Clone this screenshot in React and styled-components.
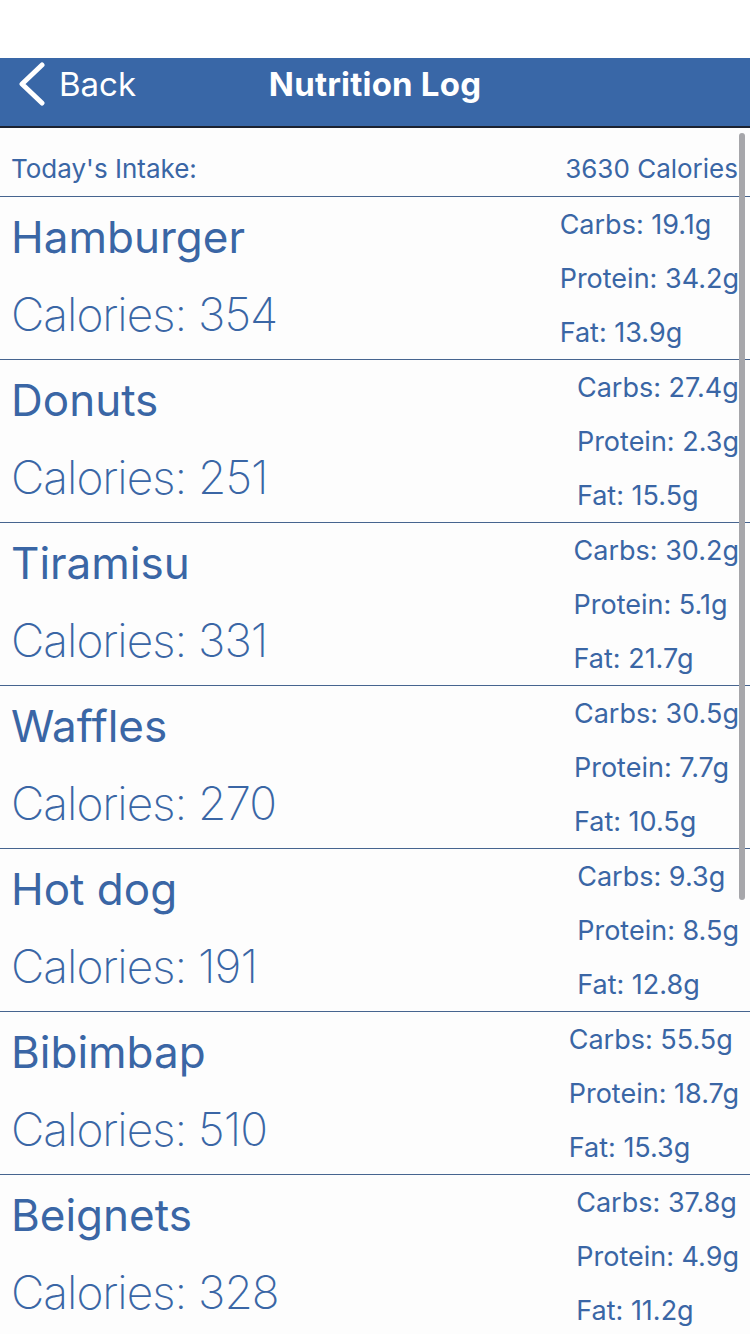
import React from "react";
import styled, { createGlobalStyle } from "styled-components";

const GlobalStyle = createGlobalStyle`
  html, body {
    margin: 0;
    padding: 0;
    background: #ffffff;
  }
  body {
    font-family: Inter, "Noto Sans", "Liberation Sans", sans-serif;
    -webkit-font-smoothing: antialiased;
  }
`;

const Screen = styled.div`
  width: 750px;
  height: 1334px;
  overflow: hidden;
  position: relative;
  background: #ffffff;
`;

const StatusArea = styled.div`
  height: 58px;
  background: #ffffff;
`;

const NavBar = styled.header`
  height: 70px;
  box-sizing: border-box;
  padding-bottom: 16px;
  background: #3967a7;
  border-bottom: 2px solid #1c2230;
  display: grid;
  grid-template-columns: 1fr auto 1fr;
  align-items: center;
  color: #ffffff;
`;

const BackButton = styled.div`
  display: flex;
  align-items: center;
  gap: 13px;
  padding-left: 18px;
  font-size: 33px;
  font-weight: 400;
`;

const Title = styled.h1`
  margin: 0;
  font-size: 33px;
  font-weight: 700;
  letter-spacing: 0.2px;
`;

const List = styled.div`
  background: #fdfdfd;
  color: #3a66a5;
`;

const IntakeRow = styled.div`
  height: 69px;
  border-bottom: 1px solid #46648f;
  display: flex;
  align-items: center;
  justify-content: space-between;
  padding: 13px 12px 0 11px;
  box-sizing: border-box;
  font-size: 26px;
`;

const FoodRow = styled.div`
  height: 163px;
  box-sizing: border-box;
  border-bottom: 1px solid #46648f;
  display: flex;
  justify-content: space-between;
  padding: 0 11px;
`;

const FoodInfo = styled.div`
  display: flex;
  flex-direction: column;
`;

const FoodName = styled.div`
  font-size: 44px;
  font-weight: 400;
  line-height: 1;
  margin-top: 18px;
`;

const FoodCalories = styled.div`
  font-size: 46px;
  font-weight: 200;
  letter-spacing: -1px;
  line-height: 1;
  margin-top: 32px;
`;

const Macros = styled.div`
  display: flex;
  flex-direction: column;
  padding-top: 1px;
`;

const Macro = styled.div`
  font-size: 27px;
  line-height: 54px;
  height: 54px;
`;

const ScrollBar = styled.div`
  position: absolute;
  top: 133px;
  right: 5px;
  width: 6px;
  height: 767px;
  border-radius: 3px;
  background: #a6a6aa;
`;

const foods = [
  { name: "Hamburger", calories: 354, carbs: "19.1", protein: "34.2", fat: "13.9" },
  { name: "Donuts", calories: 251, carbs: "27.4", protein: "2.3", fat: "15.5" },
  { name: "Tiramisu", calories: 331, carbs: "30.2", protein: "5.1", fat: "21.7" },
  { name: "Waffles", calories: 270, carbs: "30.5", protein: "7.7", fat: "10.5" },
  { name: "Hot dog", calories: 191, carbs: "9.3", protein: "8.5", fat: "12.8" },
  { name: "Bibimbap", calories: 510, carbs: "55.5", protein: "18.7", fat: "15.3" },
  { name: "Beignets", calories: 328, carbs: "37.8", protein: "4.9", fat: "11.2" },
];

function Chevron() {
  return (
    <svg width="28" height="44" viewBox="0 0 28 44">
      <path
        d="M24 3 L4 22 L24 41"
        fill="none"
        stroke="#ffffff"
        strokeWidth="5"
        strokeLinecap="round"
        strokeLinejoin="round"
      />
    </svg>
  );
}

export default function App() {
  return (
    <>
      <GlobalStyle />
      <Screen>
        <StatusArea />
        <NavBar>
          <BackButton>
            <Chevron />
            Back
          </BackButton>
          <Title>Nutrition Log</Title>
          <div />
        </NavBar>
        <List>
          <IntakeRow>
            <span>Today's Intake:</span>
            <span>3630 Calories</span>
          </IntakeRow>
          {foods.map((f) => (
            <FoodRow key={f.name}>
              <FoodInfo>
                <FoodName>{f.name}</FoodName>
                <FoodCalories>Calories: {f.calories}</FoodCalories>
              </FoodInfo>
              <Macros>
                <Macro>Carbs: {f.carbs}g</Macro>
                <Macro>Protein: {f.protein}g</Macro>
                <Macro>Fat: {f.fat}g</Macro>
              </Macros>
            </FoodRow>
          ))}
        </List>
        <ScrollBar />
      </Screen>
    </>
  );
}
